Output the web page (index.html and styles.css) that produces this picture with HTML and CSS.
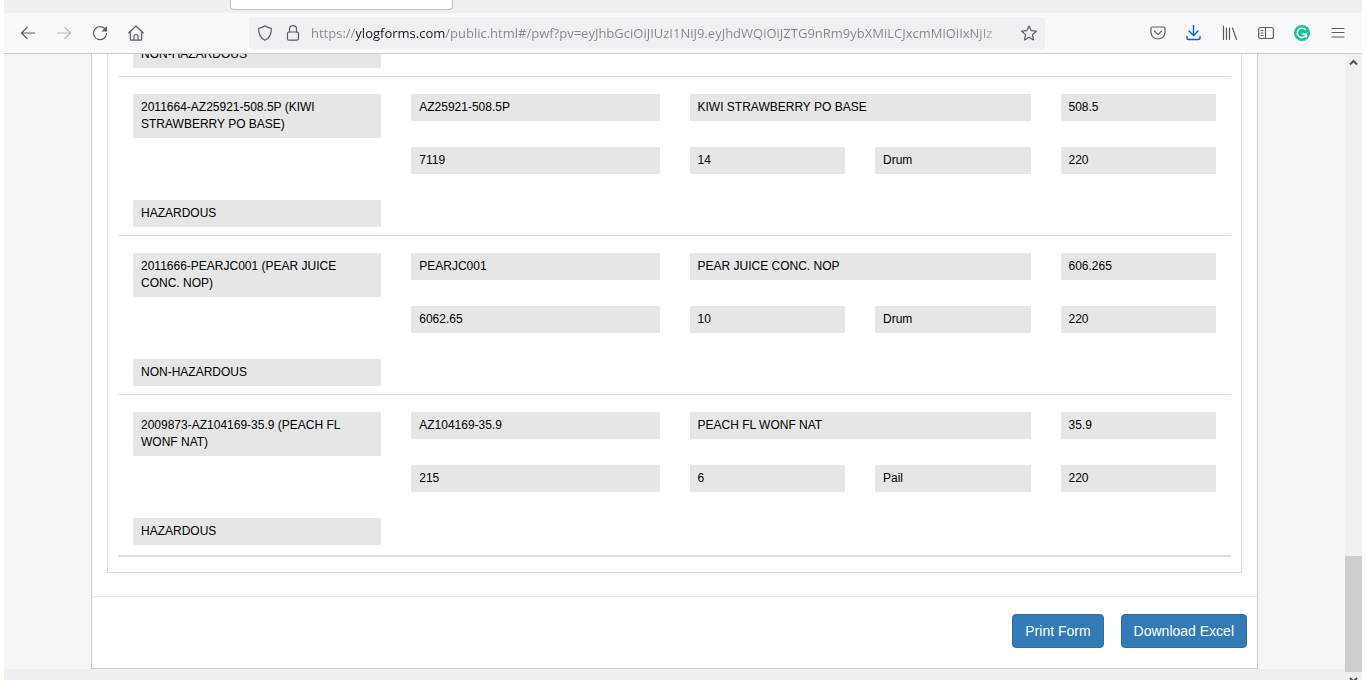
FILE: index.html
```html
<!DOCTYPE html>
<html lang="en">
<head>
    <meta charset="UTF-8">
    <title>Public Form</title>
    <meta name="viewport" content="width=device-width, initial-scale=1.0">
    <link rel="stylesheet" href="styles.css">
</head>
<body>
    <div class="tab-strip">
        <div class="tab"></div>
    </div>
    <nav class="toolbar">
        <button class="tool" aria-label="Back">
            <svg width="16" height="16" viewBox="0 0 16 16"><path d="M14.500 8H1.500M7 2.500L1.500 8L7 13.500"/></svg>
        </button>
        <button class="tool disabled" aria-label="Forward" disabled>
            <svg width="16" height="16" viewBox="0 0 16 16"><path d="M1.500 8h13M9 2.500l5.500 5.500L9 13.500"/></svg>
        </button>
        <button class="tool" aria-label="Reload">
            <svg width="16" height="16" viewBox="0 0 16 16"><path d="M12.500 3.500A6.500 6.500 0 1 0 14.500 8.500"/><path class="solid" d="M15 1v5.500h-5.500z"/></svg>
        </button>
        <button class="tool" aria-label="Home">
            <svg width="16" height="16" viewBox="0 0 16 16"><path d="M.8 8L8 1l7.200 7M2.300 6.800v7.400q0 1 1 1h9.400q1 0 1-1V6.800M6 15v-4q0-1.500 2-1.500t2 1.500v4"/></svg>
        </button>
        <div class="address-bar">
            <svg width="16" height="16" viewBox="0 0 16 16"><path d="M8 .8Q5.500 2.700 1.700 3.300C1.300 9 3.500 13 8 15.300C12.500 13 14.700 9 14.300 3.300Q10.500 2.700 8 .8z"/></svg>
            <svg width="16" height="16" viewBox="0 0 16 16"><rect x="2.500" y="7" width="11" height="8.200" rx="1.500"/><path d="M4.500 7V4.200a3.500 3.500 0 0 1 7 0V7"/></svg>
            <input class="url" type="text" aria-label="Address" spellcheck="false" value="https://ylogforms.com/public.html#/pwf?pv=eyJhbGciOiJIUzI1NiJ9.eyJhdWQiOiJZTG9nRm9ybXMiLCJxcmMiOiIxNjIz">
            <button class="star" aria-label="Bookmark this page">
                <svg width="16" height="16" viewBox="0 0 16 16"><path d="M8 .9l2.100 4.700 5.200.6-3.900 3.400 1.100 5.300L8 12.300l-4.500 2.600 1.100-5.300L.7 6.200l5.200-.6z"/></svg>
            </button>
        </div>
        <button class="tool" aria-label="Save to Pocket">
            <svg width="16" height="16" viewBox="0 0 16 16"><path d="M2.500 2h11q1.500 0 1.500 1.500V7.500a7 6.500 0 0 1-14 0V3.500Q1 2 2.500 2zM4.500 6.200L8 9.600l3.500-3.400"/></svg>
        </button>
        <button class="tool download" aria-label="Downloads">
            <svg width="16" height="16" viewBox="0 0 16 16"><path d="M7.500 0v10.500M3 6L7.500 10.500L12 6M1 11.500v1.500q0 1.500 1.500 1.500h10q1.500 0 1.500-1.500v-1.500"/></svg>
        </button>
        <button class="tool" aria-label="Library">
            <svg width="16" height="16" viewBox="0 0 16 16"><path d="M1.500 1v13.500M4.500 3v11.500M7.500 3v11.500M10.500 3l4 11.500"/></svg>
        </button>
        <button class="tool" aria-label="Sidebars">
            <svg width="16" height="16" viewBox="0 0 16 16"><rect x=".6" y="2.500" width="14.800" height="11" rx="2"/><path d="M7.500 2.500v11M3 5.500h2M3 8h2M3 10.500h2"/></svg>
        </button>
        <button class="tool" aria-label="Grammar check">
            <svg width="16" height="16" viewBox="0 0 16 16"><circle class="badge" cx="8" cy="8" r="8"/><path class="mark" d="M11.300 4.500A4.700 4.700 0 1 0 12.500 9H8.700M12.400 8.500v3.300"/></svg>
        </button>
        <button class="tool" aria-label="Menu">
            <svg width="16" height="16" viewBox="0 0 16 16"><path d="M2 3.500h12M2 7.500h12M2 12h12"/></svg>
        </button>
    </nav>
    <div class="window">
        <main class="page">
            <div class="panel">
                <div class="items">
                    <section class="item">
                        <div class="field hazard">NON-HAZARDOUS</div>
                    </section>
                    <section class="item">
                        <div class="field code">2011664-AZ25921-508.5P (KIWI STRAWBERRY PO BASE)</div>
                        <div class="field lot">AZ25921-508.5P</div>
                        <div class="field name">KIWI STRAWBERRY PO BASE</div>
                        <div class="field">508.5</div>
                        <div class="field total">7119</div>
                        <div class="field">14</div>
                        <div class="field">Drum</div>
                        <div class="field">220</div>
                        <div class="field hazard">HAZARDOUS</div>
                    </section>
                    <section class="item">
                        <div class="field code">2011666-PEARJC001 (PEAR JUICE CONC. NOP)</div>
                        <div class="field lot">PEARJC001</div>
                        <div class="field name">PEAR JUICE CONC. NOP</div>
                        <div class="field">606.265</div>
                        <div class="field total">6062.65</div>
                        <div class="field">10</div>
                        <div class="field">Drum</div>
                        <div class="field">220</div>
                        <div class="field hazard">NON-HAZARDOUS</div>
                    </section>
                    <section class="item">
                        <div class="field code">2009873-AZ104169-35.9 (PEACH FL WONF NAT)</div>
                        <div class="field lot">AZ104169-35.9</div>
                        <div class="field name">PEACH FL WONF NAT</div>
                        <div class="field">35.9</div>
                        <div class="field total">215</div>
                        <div class="field">6</div>
                        <div class="field">Pail</div>
                        <div class="field">220</div>
                        <div class="field hazard">HAZARDOUS</div>
                    </section>
                </div>
                <footer class="actions">
                    <button class="btn">Print Form</button>
                    <button class="btn">Download Excel</button>
                </footer>
            </div>
        </main>
        <div class="scrollbar">
            <svg class="arrow" width="17" height="17" viewBox="0 0 17 17"><path d="M5 10.500L8.500 7L12 10.500"/></svg>
            <div class="thumb"></div>
            <svg class="arrow" width="17" height="8" viewBox="0 0 17 8"><path d="M5 6l3.500 3.500L12 6"/></svg>
        </div>
    </div>
</body>
</html>
```

FILE: styles.css
```css
* {
    box-sizing: border-box;
}
body {
    margin: 0;
    padding: 0 4px;
    height: 100vh;
    display: flex;
    flex-direction: column;
    overflow: hidden;
    background: #fff;
    font-family: "Liberation Sans", Arial, sans-serif;
    color: #000;
}
button {
    font-family: inherit;
    cursor: pointer;
}

/* browser bars */
.tab-strip {
    flex: none;
    height: 13px;
    padding-left: 226px;
    background: #efefef;
}
.tab {
    width: 223px;
    height: 10px;
    background: #fff;
    border: 1px solid #bebec4;
    border-top: 0;
    border-radius: 0 0 4px 4px;
}
.toolbar {
    flex: none;
    display: flex;
    align-items: center;
    height: 41px;
    padding: 0 6px;
    background: #f9f9fb;
    border-bottom: 1px solid #ccccce;
}
.toolbar svg {
    display: block;
    flex: none;
    fill: none;
    stroke: #5b5b66;
    stroke-width: 1.2;
    stroke-linejoin: round;
    stroke-linecap: round;
}
.toolbar .solid {
    fill: #5b5b66;
    stroke: none;
}
.tool {
    display: flex;
    justify-content: center;
    width: 36px;
    padding: 0;
    background: none;
    border: 0;
}
.disabled {
    opacity: 0.4;
}
.toolbar .download svg {
    stroke: #0061e0;
    stroke-width: 1.4;
}
.toolbar .badge {
    fill: #15c39a;
    stroke: none;
}
.toolbar .mark {
    stroke: #fff;
    stroke-width: 1.4;
}
.address-bar {
    flex: 1;
    display: flex;
    align-items: center;
    gap: 12px;
    height: 32px;
    min-width: 0;
    margin: 0 95px;
    padding: 0 8px;
    background: #f0f0f4;
    border-radius: 4px;
}
.url {
    flex: 1;
    min-width: 0;
    height: 24px;
    padding: 0;
    margin: 0 -2px;
    border: 0;
    outline: 0;
    font-family: "Open Sans", "Noto Sans", sans-serif;
    font-size: 13px;
    /* host name in black, the rest grey, fading out at the end */
    color: transparent;
    background: linear-gradient(90deg, #85858b 45px, #15141a 45px 134px, #85858b 134px calc(100% - 30px), #f0f0f4);
    background-clip: text;
    -webkit-background-clip: text;
}
.star {
    padding: 0;
    background: none;
    border: 0;
}

/* page */
.window {
    flex: 1;
    min-height: 0;
    display: flex;
}
.page {
    flex: 1;
    display: flex;
    flex-direction: column;
    justify-content: flex-end;
    overflow: hidden;
    padding: 0 87px;
    background: #f5f5f5;
    border-bottom: 11px solid #ecf0f5;
}
.panel {
    background: #fff;
    border: 1px solid #ccc;
    border-top: 0;
}
.items {
    margin: 0 15px 23px;
    padding: 0 10px 15px;
    border: 1px solid #ddd;
    border-top: 0;
}
.item {
    display: grid;
    grid-template-columns: repeat(12, 1fr);
    grid-template-rows: minmax(44px, auto) minmax(44px, auto) auto;
    gap: 9px 30px;
    align-items: start;
    padding: 17px 15px 8px;
    border-top: 1px solid #ddd;
}
.item:last-child {
    padding-bottom: 10px;
    border-bottom: 2px solid #ddd;
}
.field {
    grid-column: span 2;
    padding: 5px 8px;
    background: #e6e6e6;
    font-size: 12px;
    line-height: 17px;
}
.code {
    grid-column: 1 / span 3;
}
.lot {
    grid-column: span 3;
}
.name {
    grid-column: span 4;
}
.total {
    grid-column: 4 / span 3;
}
.hazard {
    grid-column: 1 / span 3;
    grid-row: 3;
}
.actions {
    display: flex;
    justify-content: flex-end;
    gap: 17px;
    padding: 17px 10px 20px;
    border-top: 1px solid #e5e5e5;
}
.btn {
    padding: 6px 12px;
    background: #337ab7;
    border: 1px solid #2e6da4;
    border-radius: 4px;
    color: #fff;
    font-size: 14px;
    line-height: 20px;
}

/* scrollbar */
.scrollbar {
    flex: none;
    display: flex;
    flex-direction: column;
    width: 17px;
    background: #f0f0f0;
}
.arrow {
    display: block;
    fill: none;
    stroke: #505050;
    stroke-width: 2;
}
.thumb {
    height: 116px;
    margin-top: auto;
    background: #cdcdcd;
}
```
